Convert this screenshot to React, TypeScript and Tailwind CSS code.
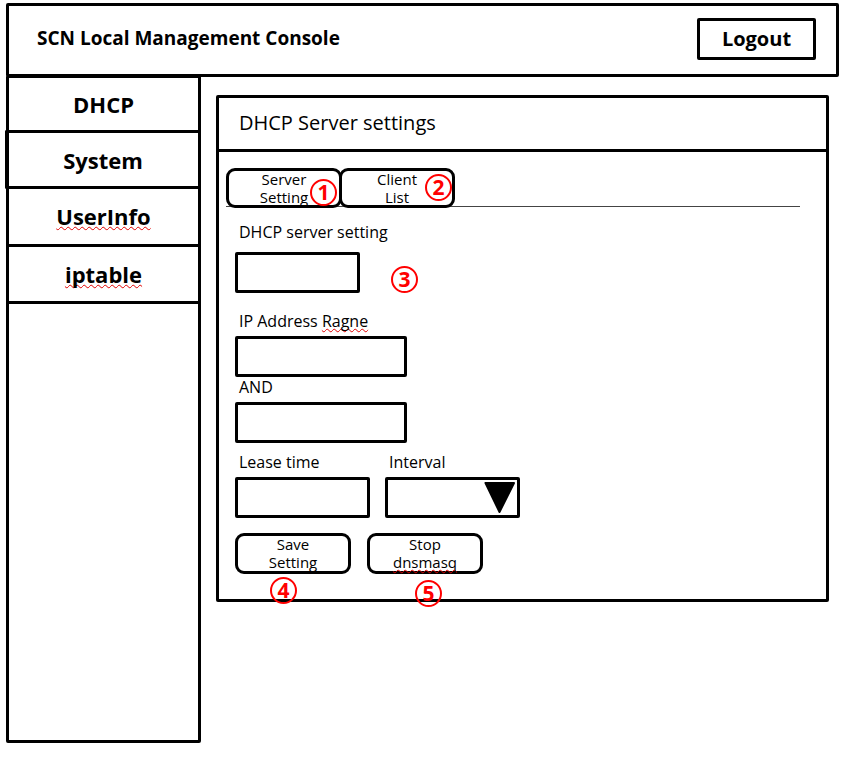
import type { ReactNode } from "react";

function Badge({ n, className = "" }: { n: number; className?: string }) {
  return (
    <span
      className={`flex h-[27px] w-[27px] items-center justify-center rounded-full border-2 border-[#ff0000] pb-px text-[21px] leading-5 font-bold text-[#ff0000] ${className}`}
    >
      {n}
    </span>
  );
}

function Misspelt({ children }: { children: ReactNode }) {
  return (
    <span className="underline decoration-[#e00000] decoration-wavy decoration-1 underline-offset-1 [text-decoration-skip-ink:none]">
      {children}
    </span>
  );
}

const navItem = "flex items-center justify-center border-black text-[22px] leading-8 font-bold";
const label = "block pl-1 text-[16px] leading-5";
const field = "block h-[41px] rounded-[2px] border-3 border-black bg-white px-2 text-[16px] outline-none";
const roundButton =
  "flex w-[116px] items-center justify-center rounded-[9px] border-3 border-black bg-white pb-px text-center text-[15px] leading-[18px]";

export default function App() {
  return (
    <div className="flex min-h-screen flex-col bg-white pt-[3px] pr-[2px] pb-[14px] pl-[6px] font-['Open_Sans','Noto_Sans',sans-serif] text-black">
      <header className="flex items-center justify-between rounded-[2px] border-3 border-black pt-3 pr-5 pb-[14px] pl-7">
        <h1 className="pb-[2px] text-[19px] leading-7 font-bold">SCN Local Management Console</h1>
        <button type="button" className="h-[42px] w-[119px] rounded-[2px] border-3 border-black text-[20px] leading-7 font-bold">
          Logout
        </button>
      </header>

      <div className="-mt-[2px] flex flex-1">
        <nav className="flex w-[195px] shrink-0 flex-col rounded-[2px] border-3 border-black">
          <a href="#dhcp" className={`${navItem} h-[55px] border-b-3`}>
            DHCP
          </a>
          <a href="#system" className={`${navItem} -mt-[3px] -ml-1 h-[59px] rounded-l-[2px] border-y-3 border-l-3`}>
            System
          </a>
          <a href="#userinfo" className={`${navItem} h-[58px] border-b-3 pb-[2px]`}>
            <Misspelt>UserInfo</Misspelt>
          </a>
          <a href="#iptable" className={`${navItem} h-[57px] border-b-3`}>
            <Misspelt>iptable</Misspelt>
          </a>
        </nav>

        <main className="mt-5 mr-[10px] ml-[15px] flex-1 self-start rounded-[2px] border-3 border-black">
          <h2 className="flex h-[54px] items-center border-b-3 border-black pb-[2px] pl-5 text-[20px] leading-7">
            DHCP Server settings
          </h2>

          <div className="pt-4 pr-[26px] pl-[7px]">
            <div className="flex border-b border-[#444444]">
              <div className="relative -mb-[2px]">
                <button type="button" className={`${roundButton} h-10`}>
                  Server
                  <br />
                  Setting
                </button>
                <Badge n={1} className="absolute top-[11px] left-[84px]" />
              </div>
              <div className="relative -mb-[2px] -ml-[3px]">
                <button type="button" className={`${roundButton} h-10`}>
                  Client
                  <br />
                  List
                </button>
                <Badge n={2} className="absolute top-[6px] left-[86px]" />
              </div>
            </div>
          </div>

          <form className="px-4 pt-[15px] pb-[25px]" onSubmit={(e) => e.preventDefault()}>
            <label htmlFor="server" className={label}>
              DHCP server setting
            </label>
            <div className="mt-[10px] flex items-center gap-[31px]">
              <input id="server" type="text" className={`${field} w-[125px]`} />
              <Badge n={3} className="mt-[14px]" />
            </div>

            <label htmlFor="range-start" className={`${label} mt-[18px]`}>
              IP Address <Misspelt>Ragne</Misspelt>
            </label>
            <input id="range-start" type="text" className={`${field} mt-[5px] w-[172px]`} />
            <label htmlFor="range-end" className={label}>
              AND
            </label>
            <input id="range-end" type="text" className={`${field} mt-[5px] w-[172px]`} />

            <div className="mt-[9px] flex gap-[15px]">
              <div>
                <label htmlFor="lease" className={label}>
                  Lease time
                </label>
                <input id="lease" type="text" className={`${field} mt-[5px] w-[135px]`} />
              </div>
              <div>
                <label htmlFor="interval" className={label}>
                  Interval
                </label>
                <div className="relative mt-[5px]">
                  <select id="interval" className={`${field} w-[135px] appearance-none`} />
                  <svg
                    className="pointer-events-none absolute top-1 right-1"
                    width="32"
                    height="32"
                    viewBox="0 0 32 32"
                    aria-hidden="true"
                  >
                    <path
                      d="M1.500 2H30L15.500 31Z"
                      fill="#000"
                      stroke="#000"
                      strokeWidth="2"
                      strokeLinejoin="round"
                    />
                  </svg>
                </div>
              </div>
            </div>

            <div className="mt-[15px] flex gap-4">
              <div className="relative">
                <button type="submit" className={`${roundButton} h-[41px]`}>
                  Save
                  <br />
                  Setting
                </button>
                <Badge n={4} className="absolute top-[44px] left-[35px]" />
              </div>
              <div className="relative">
                <button type="button" className={`${roundButton} h-[41px]`}>
                  <span>
                    Stop
                    <br />
                    <Misspelt>dnsmasq</Misspelt>
                  </span>
                </button>
                <Badge n={5} className="absolute top-[47px] left-[48px]" />
              </div>
            </div>
          </form>
        </main>
      </div>
    </div>
  );
}
